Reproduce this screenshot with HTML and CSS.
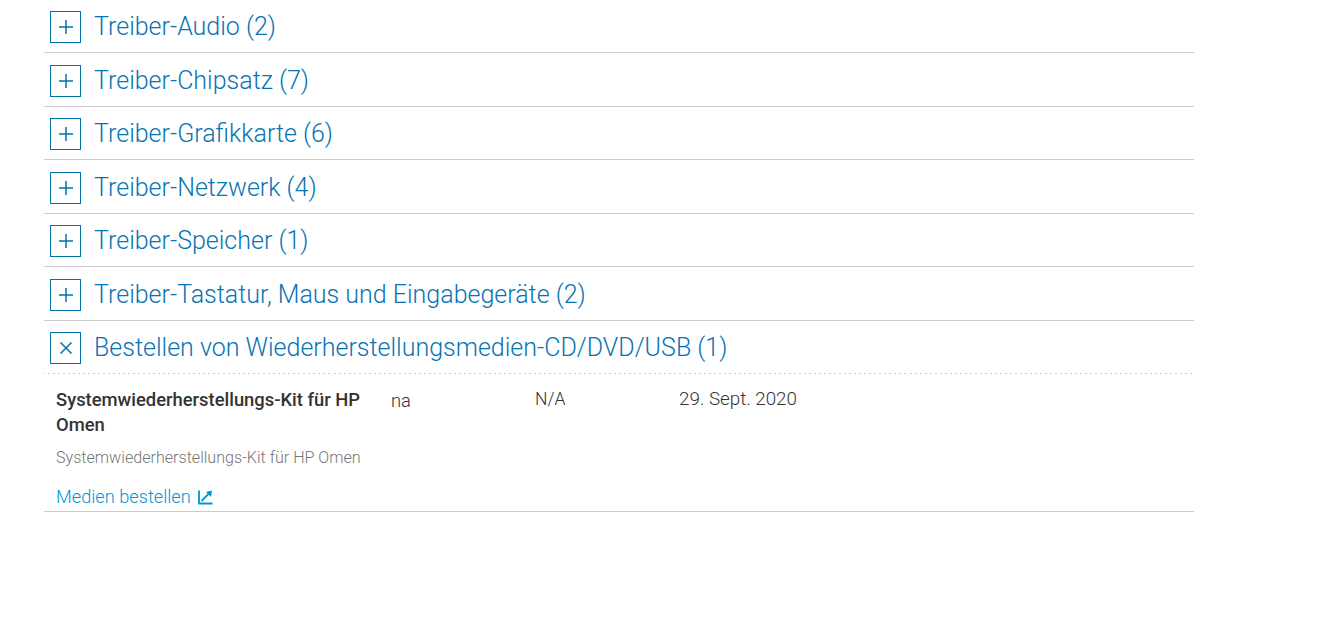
FILE: index.html
```html
<!DOCTYPE html>
<html lang="de">
<head>
    <meta charset="UTF-8">
    <meta name="viewport" content="width=device-width, initial-scale=1.0">
    <title>Treiber</title>
    <link rel="stylesheet" href="styles.css">
</head>
<body>
    <div class="accordion">
        <div class="row">
            <div class="head"><span class="toggle"><svg viewBox="0 0 14 14" width="14" height="14"><path d="M7 0v14M0 7h14"/></svg></span><span class="title">Treiber-Audio (2)</span></div>
        </div>
        <div class="row">
            <div class="head"><span class="toggle"><svg viewBox="0 0 14 14" width="14" height="14"><path d="M7 0v14M0 7h14"/></svg></span><span class="title">Treiber-Chipsatz (7)</span></div>
        </div>
        <div class="row">
            <div class="head"><span class="toggle"><svg viewBox="0 0 14 14" width="14" height="14"><path d="M7 0v14M0 7h14"/></svg></span><span class="title">Treiber-Grafikkarte (6)</span></div>
        </div>
        <div class="row">
            <div class="head"><span class="toggle"><svg viewBox="0 0 14 14" width="14" height="14"><path d="M7 0v14M0 7h14"/></svg></span><span class="title">Treiber-Netzwerk (4)</span></div>
        </div>
        <div class="row">
            <div class="head"><span class="toggle"><svg viewBox="0 0 14 14" width="14" height="14"><path d="M7 0v14M0 7h14"/></svg></span><span class="title">Treiber-Speicher (1)</span></div>
        </div>
        <div class="row">
            <div class="head"><span class="toggle"><svg viewBox="0 0 14 14" width="14" height="14"><path d="M7 0v14M0 7h14"/></svg></span><span class="title">Treiber-Tastatur, Maus und Eingabegeräte (2)</span></div>
        </div>
        <div class="row">
            <div class="head open"><span class="toggle"><svg viewBox="0 0 14 14" width="14" height="14"><path d="M1.500 1.500l11 11M12.500 1.500l-11 11"/></svg></span><span class="title">Bestellen von Wiederherstellungsmedien-CD/DVD/USB (1)</span></div>
            <div class="detail">
                <div class="col-name">
                    <div class="name">Systemwiederherstellungs-Kit für HP Omen</div>
                    <div class="desc">Systemwiederherstellungs-Kit für HP Omen</div>
                    <a class="order" href="#">Medien bestellen <svg class="ext" viewBox="0 0 15 15" width="15" height="15"><path class="ext-line" d="M1 .5V13.500h13.500M3.500 11L10.500 4"/><path class="ext-head" d="M14 0.500L8 2l5 5z"/></svg></a>
                </div>
                <div class="col-version">na</div>
                <div class="col-size">N/A</div>
                <div class="col-date">29. Sept. 2020</div>
            </div>
        </div>
    </div>
</body>
</html>
```

FILE: styles.css
```css
body { margin: 0; background: #fff; font-family: Roboto, "Open Sans", sans-serif; font-weight: 300; }
.accordion { width: 1150px; margin: -0.5px 0 0 44px; }
.row { border-bottom: 1px solid #ccc; }
.head { display: flex; align-items: center; gap: 13px; height: 52.5px; padding: 0 6px; }
.head.open { border-bottom: 1px dashed transparent; border-image: repeating-linear-gradient(90deg, #ccc 0 2px, transparent 2px 5px) 1; }
.toggle { display: flex; align-items: center; justify-content: center; box-sizing: border-box; width: 31px; height: 32px; border: 1px solid #0073ab; margin-top: 3px; }
.toggle svg { fill: none; stroke: #0073ab; stroke-width: 1.5; }
.title { font-size: 25px; color: #0973b3; margin-top: 2px; }
.detail { display: flex; padding: 13px 12px 3px; color: #333; font-size: 18.4px; }
.col-name { width: 335px; }
.col-version { width: 144px; padding-top: 3px; }
.col-size { width: 144px; padding-top: 2px; font-size: 17.5px; }
.col-date { padding-top: 1px; font-size: 18.8px; }
.name { font-weight: 500; line-height: 25px; }
.desc { font-size: 16.1px; color: #767676; margin-top: 11px; }
.order { display: block; margin-top: 19px; color: #0096d6; text-decoration: none; line-height: 22px; font-size: 18.2px; }
.ext { vertical-align: -2px; margin-left: 3px; }
.ext-line { fill: none; stroke: #0096d6; stroke-width: 1.8; }
.ext-head { fill: #0096d6; }
```
